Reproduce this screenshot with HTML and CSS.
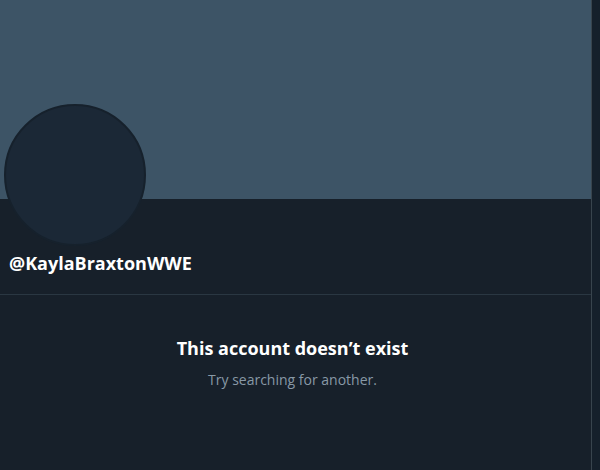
FILE: index.html
```html
<!DOCTYPE html>
<html>
<head>
<meta charset="utf-8">
<link rel="stylesheet" href="styles.css">
</head>
<body>
<div class="page">
  <main class="column">
    <div class="banner"></div>
    <div class="profile">
      <div class="avatar"></div>
      <div class="handle">@KaylaBraxtonWWE</div>
    </div>
    <section class="empty">
      <h2 class="title">This account doesn’t exist</h2>
      <p class="sub">Try searching for another.</p>
    </section>
  </main>
</div>
</body>
</html>
```

FILE: styles.css
```css
html, body {
  margin: 0;
  padding: 0;
  background: #15202b;
  font-family: "Open Sans", "Noto Sans", sans-serif;
}
.page {
  display: flex;
  height: 470px;
  overflow: hidden;
}
.column {
  width: 591px;
  border-right: 1px solid #38444d;
  flex: none;
  background: #17202a;
}
.banner {
  height: 199px;
  background: #3d5466;
}
.profile {
  display: flex;
  flex-direction: column;
  padding: 0 9px;
  height: 95px;
  border-bottom: 1px solid #2a3742;
}
.avatar {
  width: 138px;
  height: 138px;
  margin-top: -95px;
  margin-left: -5px;
  border-radius: 50%;
  background: #1b2836;
  border: 2px solid #16212c;
  flex: none;
}
.handle {
  margin-top: 5px;
  color: #ffffff;
  font-weight: 700;
  font-size: 18px;
  line-height: 24px;
}
.empty {
  text-align: center;
  padding-top: 41px;
  padding-right: 6px;
}
.title {
  margin: 0;
  color: #ffffff;
  font-weight: 700;
  font-size: 18px;
  line-height: 24px;
}
.sub {
  margin: 10px 0 0;
  color: #8899a6;
  font-size: 14px;
  line-height: 19px;
}
```
